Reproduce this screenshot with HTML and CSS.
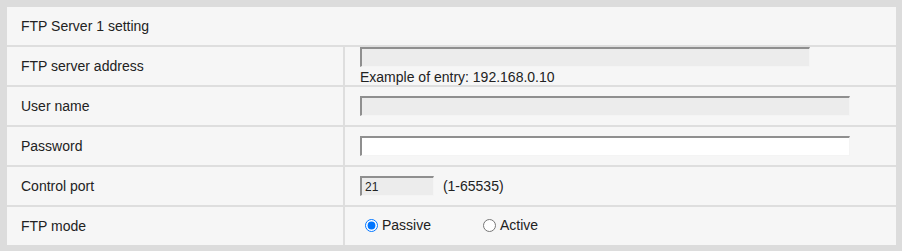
FILE: index.html
```html
<!DOCTYPE html>
<html lang="en">
<head>
    <meta charset="UTF-8">
    <meta name="viewport" content="width=device-width, initial-scale=1.0">
    <title>FTP Server Setting</title>
    <link rel="stylesheet" href="styles.css">
</head>
<body>
    <table class="settings">
        <tr>
            <th colspan="2">FTP Server 1 setting</th>
        </tr>
        <tr>
            <td class="label">FTP server address</td>
            <td class="value">
                <input type="text" class="field wide disabled" disabled>
                <div class="hint">Example of entry: 192.168.0.10</div>
            </td>
        </tr>
        <tr>
            <td class="label">User name</td>
            <td class="value"><input type="text" class="field full disabled" disabled></td>
        </tr>
        <tr>
            <td class="label">Password</td>
            <td class="value"><input type="password" class="field full"></td>
        </tr>
        <tr>
            <td class="label">Control port</td>
            <td class="value">
                <input type="text" class="field port disabled" value="21" disabled>
                <span class="range">(1-65535)</span>
            </td>
        </tr>
        <tr>
            <td class="label">FTP mode</td>
            <td class="value">
                <label class="radio"><input type="radio" name="mode" checked> Passive</label>
                <label class="radio"><input type="radio" name="mode"> Active</label>
            </td>
        </tr>
    </table>
</body>
</html>
```
FILE: styles.css
```css
body {
    font-family: "Liberation Sans", Arial, sans-serif;
    font-size: 14px;
    color: #222;
    background-color: #dcdcdc;
    margin: 0;
    padding: 7px 6px 6px 7px;
}
.settings {
    width: 889px;
    border-collapse: collapse;
    background-color: #f6f6f6;
}
.settings th,
.settings td {
    border-top: 2px solid #dedede;
    padding: 0;
    height: 38px;
    text-align: left;
    vertical-align: middle;
}
.settings tr:first-child th {
    border-top: none;
    font-weight: normal;
    padding-left: 14px;
}
.label {
    width: 322px;
    padding-left: 14px !important;
    border-right: 2px solid #dedede;
}
.value {
    padding-left: 15px !important;
}
.field {
    box-sizing: border-box;
    height: 20px;
    margin: 0;
    padding: 1px 3px;
    font-family: "Liberation Sans", Arial, sans-serif;
    font-size: 12px;
    color: #222;
    background-color: #fff;
    border: 1px solid #f4f4f4;
    border-top: 2px solid #8f8f8f;
    border-left: 2px solid #8f8f8f;
    display: block;
}
.disabled {
    background-color: #ececec;
}
.wide {
    width: 450px;
}
.full {
    width: 490px;
}
.port {
    width: 74px;
    display: inline-block;
    vertical-align: middle;
}
.hint {
    margin-top: 2px;
    line-height: 16px;
}
.range {
    margin-left: 5px;
    vertical-align: middle;
}
.radio {
    display: inline-flex;
    align-items: center;
    margin-left: 5px;
    margin-right: 43px;
}
.radio input {
    margin: 0 4px 0 0;
    width: 13px;
    height: 13px;
}
```
